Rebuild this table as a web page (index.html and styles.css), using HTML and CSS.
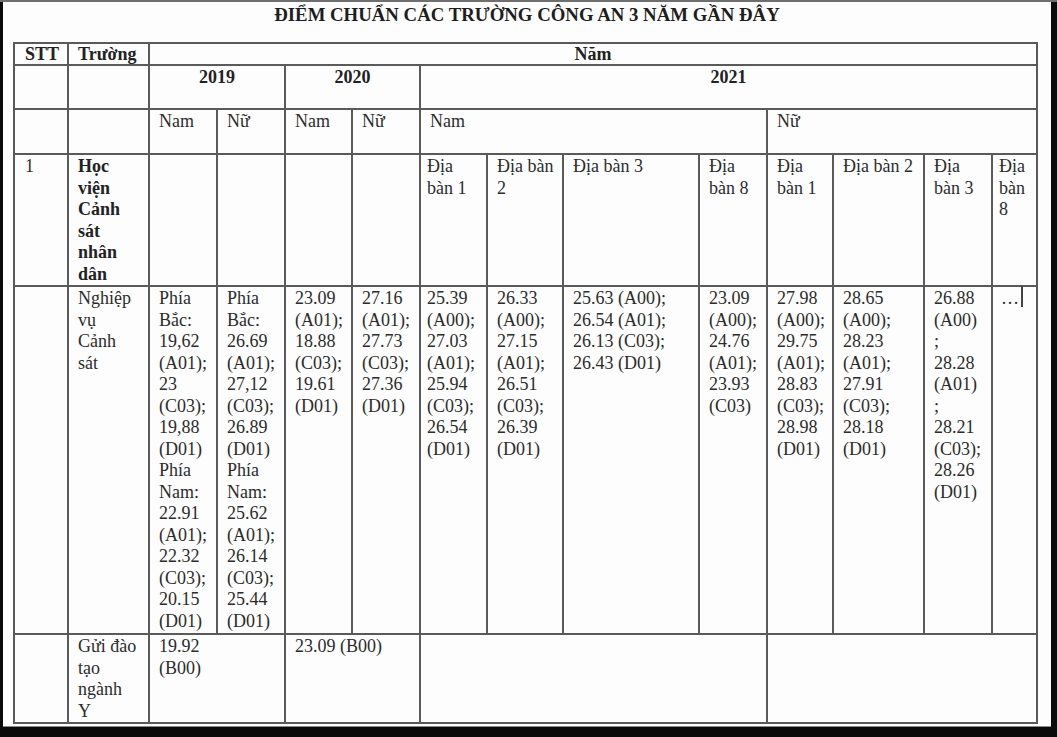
FILE: index.html
```html
<!DOCTYPE html>
<html lang="vi">
<head>
<meta charset="utf-8">
<title>Điểm chuẩn các trường công an 3 năm gần đây</title>
<link rel="stylesheet" href="styles.css">
</head>
<body>
<div class="frame">
  <div class="page">
    <h1 class="title">ĐIỂM CHUẨN CÁC TRƯỜNG CÔNG AN 3 NĂM GẦN ĐÂY</h1>
    <table class="grid">
      <colgroup>
        <col class="w54"><col class="w81"><col class="w68"><col class="w68"><col class="w67"><col class="w68"><col class="w67">
        <col class="w76"><col class="w136"><col class="w68"><col class="w66"><col class="w91"><col class="w68"><col class="w45">
      </colgroup>
      <tbody>
        <tr class="r1">
          <th class="stt">STT</th>
          <th>Trường</th>
          <th class="ctr" colspan="12">Năm</th>
        </tr>
        <tr class="r2">
          <td></td><td></td>
          <th class="ctr" colspan="2">2019</th>
          <th class="ctr" colspan="2">2020</th>
          <th class="ctr" colspan="8">2021</th>
        </tr>
        <tr class="r3">
          <td></td><td></td>
          <td>Nam</td><td>Nữ</td><td>Nam</td><td>Nữ</td>
          <td colspan="4">Nam</td>
          <td colspan="4">Nữ</td>
        </tr>
        <tr class="r4">
          <td class="stt">1</td>
          <td class="b">Học<br>viện<br>Cảnh<br>sát<br>nhân<br>dân</td>
          <td></td><td></td><td></td><td></td>
          <td class="tight">Địa<br>bàn 1</td>
          <td>Địa bàn<br>2</td>
          <td>Địa bàn 3</td>
          <td>Địa<br>bàn 8</td>
          <td>Địa<br>bàn 1</td>
          <td>Địa bàn 2</td>
          <td>Địa<br>bàn 3</td>
          <td class="tight">Địa<br>bàn<br>8</td>
        </tr>
        <tr class="r5">
          <td></td>
          <td>Nghiệp<br>vụ<br>Cảnh<br>sát</td>
          <td>Phía<br>Bắc:<br>19,62<br>(A01);<br>23<br>(C03);<br>19,88<br>(D01)<br>Phía<br>Nam:<br>22.91<br>(A01);<br>22.32<br>(C03);<br>20.15<br>(D01)</td>
          <td>Phía<br>Bắc:<br>26.69<br>(A01);<br>27,12<br>(C03);<br>26.89<br>(D01)<br>Phía<br>Nam:<br>25.62<br>(A01);<br>26.14<br>(C03);<br>25.44<br>(D01)</td>
          <td>23.09<br>(A01);<br>18.88<br>(C03);<br>19.61<br>(D01)</td>
          <td>27.16<br>(A01);<br>27.73<br>(C03);<br>27.36<br>(D01)</td>
          <td class="tight">25.39<br>(A00);<br>27.03<br>(A01);<br>25.94<br>(C03);<br>26.54<br>(D01)</td>
          <td>26.33<br>(A00);<br>27.15<br>(A01);<br>26.51<br>(C03);<br>26.39<br>(D01)</td>
          <td>25.63 (A00);<br>26.54 (A01);<br>26.13 (C03);<br>26.43 (D01)</td>
          <td>23.09<br>(A00);<br>24.76<br>(A01);<br>23.93<br>(C03)</td>
          <td>27.98<br>(A00);<br>29.75<br>(A01);<br>28.83<br>(C03);<br>28.98<br>(D01)</td>
          <td>28.65<br>(A00);<br>28.23<br>(A01);<br>27.91<br>(C03);<br>28.18<br>(D01)</td>
          <td>26.88<br>(A00)<br>;<br>28.28<br>(A01)<br>;<br>28.21<br>(C03);<br>28.26<br>(D01)</td>
          <td class="dots">…<span class="caret"></span></td>
        </tr>
        <tr class="r6">
          <td></td>
          <td>Gửi đào<br>tạo<br>ngành<br>Y</td>
          <td colspan="2">19.92<br>(B00)</td>
          <td colspan="2">23.09 (B00)</td>
          <td colspan="4"></td>
          <td colspan="4"></td>
        </tr>
      </tbody>
    </table>
  </div>
</div>
</body>
</html>
```
FILE: styles.css
```css
html, body {
  margin: 0;
  padding: 0;
  background: #0a0a0a;
}

.frame {
  height: 735px;
  border-top: 2px solid #6f6f6f;
  overflow: hidden;
}

.page {
  margin-left: 3px;
  width: 1048px;
  height: 724px;
  background: #fdfdfd;
  border-bottom: 1px solid #8a8a8a;
  overflow: hidden;
}

.title {
  margin: 2px 0 0;
  font-family: "Liberation Serif", "DejaVu Serif", serif;
  font-weight: bold;
  font-size: 18.8px;
  line-height: 22px;
  text-align: center;
  color: #1e1e1e;
}

.grid {
  margin: 16px 0 0 10px;
  width: 1023px;
  border-collapse: collapse;
  table-layout: fixed;
  font-family: "Liberation Serif", "DejaVu Serif", serif;
  font-size: 18px;
  line-height: 21.5px;
  color: #2c2c2c;
}

.grid td,
.grid th {
  border: 2px solid #5a5a5a;
  padding: 1px 3px 0 9px;
  vertical-align: top;
  text-align: left;
  white-space: nowrap;
  font-weight: normal;
}

.grid th,
.grid .b {
  font-weight: bold;
  color: #222;
}

.grid .ctr {
  text-align: center;
  padding-left: 3px;
}

.grid .stt {
  padding-left: 10px;
}

.grid .tight {
  padding-left: 6px;
}

.grid .r1 th {
  line-height: 19px;
  padding-top: 1px;
}

.w54 { width: 54px; }
.w81 { width: 81px; }
.w68 { width: 68px; }
.w67 { width: 67px; }
.w76 { width: 76px; }
.w136 { width: 136px; }
.w66 { width: 66px; }
.w91 { width: 91px; }
.w45 { width: 45px; }

.r1 { height: 22px; }
.r2 { height: 44px; }
.r3 { height: 45px; }
.r4 { height: 131px; }
.r5 { height: 348px; }
.r6 { height: 88px; }

.grid .dots {
  padding-left: 8px;
}

.caret {
  display: inline-block;
  width: 1.5px;
  height: 21px;
  margin: -2px 0 0 2px;
  background: #444;
  vertical-align: top;
}
```
